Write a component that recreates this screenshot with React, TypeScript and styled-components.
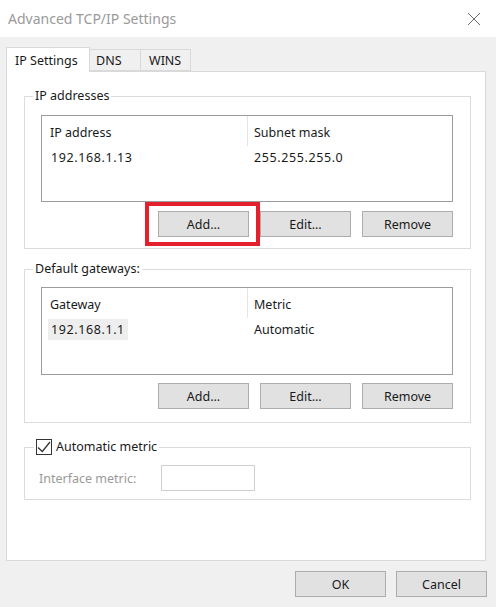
import React from "react";
import styled, { createGlobalStyle } from "styled-components";

const GlobalStyle = createGlobalStyle`
    html, body {
        margin: 0;
        padding: 0;
        background: #f0f0f0;
    }
    body {
        font-family: "Noto Sans", "DejaVu Sans", sans-serif;
        font-size: 12.5px;
        color: #1a1a1a;
    }
`;

const Window = styled.div`
    width: 496px;
    height: 607px;
    display: flex;
    flex-direction: column;
    background: #f0f0f0;
    overflow: hidden;
`;

const TitleBar = styled.div`
    height: 37px;
    flex: none;
    background: #fff;
    display: flex;
    align-items: center;
    justify-content: space-between;
    padding: 0 15px 0 8px;
    box-sizing: border-box;
`;

const Title = styled.span`
    color: #9a9a9a;
    font-size: 14px;
    margin-top: -1px;
`;

const Body = styled.div`
    flex: 1;
    display: flex;
    flex-direction: column;
    padding: 10px 9px 10px 6px;
    box-sizing: border-box;
`;

const TabStrip = styled.div`
    height: 24px;
    display: flex;
    align-items: flex-end;
`;

const Tab = styled.div<{ $active?: boolean; $w: number; $pl: number }>`
    box-sizing: border-box;
    width: ${(p) => p.$w}px;
    height: ${(p) => (p.$active ? "25px" : "22px")};
    margin-bottom: ${(p) => (p.$active ? "-1px" : "0")};
    margin-left: ${(p) => (p.$active ? "0" : "-1px")};
    padding-left: ${(p) => p.$pl}px;
    display: flex;
    align-items: center;
    background: ${(p) => (p.$active ? "#fff" : "#f0f0f0")};
    border: 1px solid #d9d9d9;
    border-bottom: ${(p) => (p.$active ? "none" : "1px solid #d9d9d9")};
    position: relative;
    z-index: ${(p) => (p.$active ? 2 : 1)};
    &:first-child { margin-left: 0; }
`;

const Panel = styled.div`
    width: 480px;
    height: 490px;
    box-sizing: border-box;
    background: #fff;
    border: 1px solid #d9d9d9;
    padding: 0 14px 0 17px;
    display: flex;
    flex-direction: column;
`;

const Group = styled.fieldset<{ $top: number; $pt: number; $pb: number; $pl?: number }>`
    margin: ${(p) => p.$top}px 0 0 0;
    padding: ${(p) => p.$pt}px 17px ${(p) => p.$pb}px ${(p) => p.$pl ?? 16}px;
    border: 1px solid #dcdcdc;
    min-width: 0;
    display: flex;
    flex-direction: column;
`;

const Legend = styled.legend<{ $shift?: number }>`
    padding: 0 2px;
    margin-left: ${(p) => p.$shift ?? -8}px;
    line-height: 16px;
    height: 16px;
    display: flex;
    align-items: center;
    gap: 4px;
`;

const ListBox = styled.div<{ $h: number }>`
    height: ${(p) => p.$h}px;
    box-sizing: border-box;
    border: 1px solid #9c9c9c;
    background: #fff;
`;

const Columns = styled.div`
    display: grid;
    grid-template-columns: 206px 1fr;
`;

const HeaderCell = styled.div<{ $sep?: boolean }>`
    height: 30px;
    box-sizing: border-box;
    padding-top: 2px;
    display: flex;
    align-items: center;
    padding-left: ${(p) => (p.$sep ? "6px" : "8px")};
    border-right: ${(p) => (p.$sep ? "none" : "1px solid #e5e5e5")};
`;

const RowCell = styled.div<{ $second?: boolean }>`
    height: 21px;
    margin-top: 1px;
    display: flex;
    align-items: center;
    padding-left: ${(p) => (p.$second ? "3px" : "6px")};
`;

const CellText = styled.span<{ $selected?: boolean; $num?: boolean }>`
    padding: 0 3px;
    height: 21px;
    display: flex;
    align-items: center;
    letter-spacing: ${(p) => (p.$num ? "0.6px" : "0")};
    background: ${(p) => (p.$selected ? "#eeeeee" : "transparent")};
`;

const ButtonRow = styled.div<{ $mt: number }>`
    display: flex;
    justify-content: flex-end;
    gap: 11px;
    margin-top: ${(p) => p.$mt}px;
`;

const Button = styled.button`
    width: 91px;
    height: 26px;
    box-sizing: border-box;
    background: #e1e1e1;
    border: 1px solid #adadad;
    font-family: inherit;
    font-size: 12.5px;
    color: #1a1a1a;
    padding: 0;
`;

const Highlighted = styled.div`
    position: relative;
    display: flex;
`;

const RedFrame = styled.span`
    position: absolute;
    top: -9px;
    bottom: -9px;
    left: -13px;
    right: -11px;
    border: 4px solid #e3202c;
    pointer-events: none;
`;

const MetricRow = styled.div`
    display: flex;
    align-items: center;
`;

const DisabledLabel = styled.span`
    width: 122px;
    color: #9a9a9a;
`;

const DisabledInput = styled.div`
    width: 94px;
    height: 26px;
    box-sizing: border-box;
    border: 1px solid #cfcfcf;
    background: #fff;
`;

const Footer = styled.div`
    display: flex;
    justify-content: flex-end;
    gap: 10px;
    margin-top: 10px;
`;

function CloseIcon() {
    return (
        <svg width="14" height="14" viewBox="0 0 14 14">
            <path d="M1 1 L13 13 M13 1 L1 13" stroke="#6a6a6a" strokeWidth="1" fill="none" />
        </svg>
    );
}

function CheckBox() {
    return (
        <svg width="16" height="16" viewBox="0 0 16 16">
            <rect x="0.5" y="0.5" width="15" height="15" fill="#fff" stroke="#333" />
            <path d="M2 8.5 L6.3 12.5 L14 3" stroke="#333" strokeWidth="1.3" fill="none" />
        </svg>
    );
}

export default function App() {
    return (
        <>
            <GlobalStyle />
            <Window>
                <TitleBar>
                    <Title>Advanced TCP/IP Settings</Title>
                    <CloseIcon />
                </TitleBar>
                <Body>
                    <TabStrip>
                        <Tab $active $w={84} $pl={8}>IP Settings</Tab>
                        <Tab $w={52} $pl={6}>DNS</Tab>
                        <Tab $w={51} $pl={8}>WINS</Tab>
                    </TabStrip>
                    <Panel>
                        <Group $top={16} $pt={11} $pb={11}>
                            <Legend>IP addresses</Legend>
                            <ListBox $h={87}>
                                <Columns>
                                    <HeaderCell>IP address</HeaderCell>
                                    <HeaderCell $sep>Subnet mask</HeaderCell>
                                    <RowCell><CellText $num>192.168.1.13</CellText></RowCell>
                                    <RowCell $second><CellText $num>255.255.255.0</CellText></RowCell>
                                </Columns>
                            </ListBox>
                            <ButtonRow $mt={9}>
                                <Highlighted>
                                    <Button>Add...</Button>
                                    <RedFrame />
                                </Highlighted>
                                <Button>Edit...</Button>
                                <Button>Remove</Button>
                            </ButtonRow>
                        </Group>

                        <Group $top={12} $pt={10} $pb={13}>
                            <Legend>Default gateways:</Legend>
                            <ListBox $h={88}>
                                <Columns>
                                    <HeaderCell>Gateway</HeaderCell>
                                    <HeaderCell $sep>Metric</HeaderCell>
                                    <RowCell><CellText $selected $num>192.168.1.1</CellText></RowCell>
                                    <RowCell $second><CellText>Automatic</CellText></RowCell>
                                </Columns>
                            </ListBox>
                            <ButtonRow $mt={8}>
                                <Button>Add...</Button>
                                <Button>Edit...</Button>
                                <Button>Remove</Button>
                            </ButtonRow>
                        </Group>

                        <Group $top={16} $pt={10} $pb={8} $pl={14}>
                            <Legend $shift={-5}>
                                <CheckBox />
                                <span>Automatic metric</span>
                            </Legend>
                            <MetricRow>
                                <DisabledLabel>Interface metric:</DisabledLabel>
                                <DisabledInput />
                            </MetricRow>
                        </Group>
                    </Panel>
                    <Footer>
                        <Button>OK</Button>
                        <Button>Cancel</Button>
                    </Footer>
                </Body>
            </Window>
        </>
    );
}
